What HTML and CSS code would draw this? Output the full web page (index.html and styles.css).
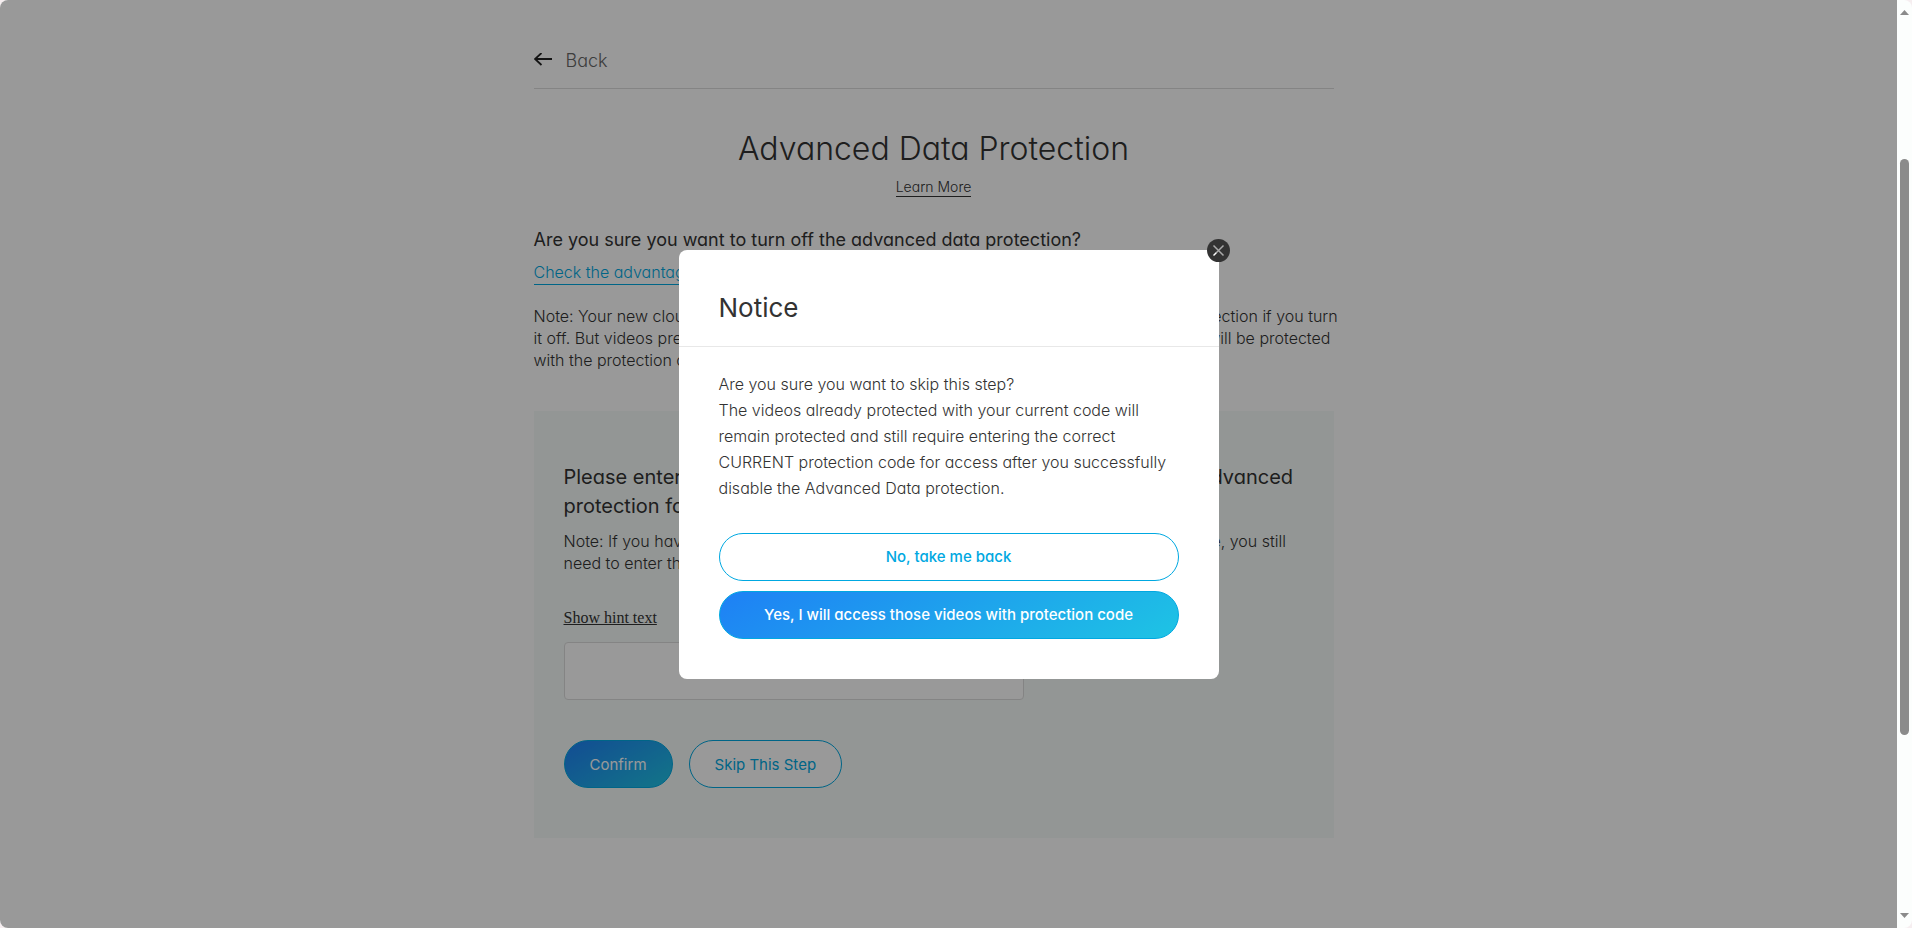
FILE: index.html
```html
<!DOCTYPE html>
<html lang="en">
<head>
<meta charset="utf-8">
<meta name="viewport" content="width=device-width, initial-scale=1">
<title>Advanced Data Protection</title>
<link rel="stylesheet" href="styles.css">
</head>
<body>
<div class="window">
  <div class="viewport">
    <main class="page">
      <a class="back" href="#">
        <svg class="back-icon" width="18" height="14" viewBox="0 0 18 14" fill="none" stroke="currentColor" stroke-width="1.800" aria-hidden="true"><path d="M18 6H1M7.500 0L1 6l6.500 6"/></svg>
        <span>Back</span>
      </a>
      <header class="page-head">
        <h1 class="title">Advanced Data Protection</h1>
        <a class="learn-more" href="#">Learn More</a>
      </header>
      <h2 class="question">Are you sure you want to turn off the advanced data protection?</h2>
      <a class="advantages" href="#">Check the advantages of protection</a>
      <p class="note intro-note">Note: Your new cloud storage videos will no longer be covered by your advanced data protection if you turn<br>it off. But videos previously recorded in cloud during your advanced data protection mode will be protected<br>with the protection code.</p>
      <form class="panel">
        <h3 class="panel-title">Please enter your existing data protection codes to switch off your advanced<br>protection for your videos</h3>
        <p class="note">Note: If you have videos protected with any earlier protection codes in your cloud space, you still<br>need to enter those codes.</p>
        <a class="hint" href="#">Show hint text</a>
        <input class="code" type="password" aria-label="Protection code">
        <div class="actions">
          <button class="btn btn-primary" type="button">Confirm</button>
          <button class="btn" type="button">Skip This Step</button>
        </div>
      </form>
    </main>
    <div class="overlay">
      <section class="dialog" role="dialog" aria-modal="true" aria-labelledby="dialog-title">
        <button class="close" type="button" aria-label="Close">
          <svg width="23" height="23" viewBox="0 0 23 23" fill="none" aria-hidden="true"><circle cx="11.500" cy="11.500" r="11.500" fill="#333"/><path d="M6.500 6.500l10 10M16.500 6.500L9.500 13.500" stroke="#aaa" stroke-width="1.500"/><path d="M9.500 13.500l-3 3" stroke="#fff" stroke-width="1.500"/></svg>
        </button>
        <h2 class="dialog-title" id="dialog-title">Notice</h2>
        <div class="dialog-body">
          <p class="dialog-text">Are you sure you want to skip this step?<br>The videos already protected with your current code will remain protected and still require entering the correct CURRENT protection code for access after you successfully disable the Advanced Data protection.</p>
          <div class="dialog-actions">
            <button class="btn strong" type="button">No, take me back</button>
            <button class="btn btn-primary strong" type="button">Yes, I will access those videos with protection code</button>
          </div>
        </div>
      </section>
    </div>
  </div>
  <div class="scrollbar" aria-hidden="true">
    <svg class="scroll-arrow" width="9" height="5" viewBox="0 0 9 5"><path d="M4.500 0L9 5H0z" fill="#8b8b8b"/></svg>
    <div class="track"><div class="thumb"></div></div>
    <svg class="scroll-arrow" width="9" height="5" viewBox="0 0 9 5"><path d="M0 0h9L4.500 5z" fill="#8b8b8b"/></svg>
  </div>
</div>
</body>
</html>
```
FILE: styles.css
```css
* { box-sizing: border-box; }

body {
  margin: 0;
  background: #f6eef0;
  color: #333;
  font-family: Inter, "Open Sans", sans-serif;
  font-feature-settings: "cv11";
  font-size: 16px;
  font-weight: 300;
}

h1, h2, h3, p { margin: 0; font-weight: 400; }
a { color: inherit; text-decoration: none; }

.window {
  display: flex;
  height: 100vh;
  border-radius: 8px;
  overflow: hidden;
  background: #fcfefd;
}

.viewport {
  position: relative;
  flex: 1;
  overflow: hidden;
  background: #fff;
}

.page {
  display: flex;
  flex-direction: column;
  align-items: flex-start;
  max-width: 830px;
  margin: 0 auto;
  padding: 32px 30px 0 0;
}

.back {
  display: flex;
  align-items: center;
  gap: 14px;
  width: 100%;
  height: 57px;
  border-bottom: 1px solid #ddd;
  font-size: 18px;
  color: #666;
}
.back-icon { color: #222; }

.page-head {
  display: flex;
  flex-direction: column;
  align-items: center;
  width: 100%;
  padding-top: 40px;
}
.title { font-size: 32px; line-height: 40px; font-weight: 300; }
.learn-more {
  margin-top: 8px;
  border-bottom: 1px solid #333;
  font-size: 14px;
  line-height: 19px;
}

.question { margin-top: 30px; font-size: 18px; line-height: 26px; }
.advantages {
  margin-top: 8px;
  border-bottom: 1px solid #00a8e1;
  line-height: 23px;
  color: #00a8e1;
}
.note { line-height: 22px; font-weight: 300; white-space: nowrap; }
.intro-note { margin-top: 20px; }

.panel {
  display: flex;
  flex-direction: column;
  align-items: flex-start;
  width: 100%;
  margin-top: 40px;
  padding: 52px 30px 50px;
  background: #f5faf8;
}
.panel-title { font-size: 20px; line-height: 29px; white-space: nowrap; }
.panel .note { margin-top: 9px; }
.hint {
  margin-top: 34px;
  font-family: "Liberation Serif", serif;
  font-size: 16px;
  font-weight: 400;
  line-height: 20px;
  text-decoration: underline;
}
.code {
  width: 100%;
  max-width: 460px;
  height: 58px;
  margin-top: 14px;
  padding: 0 16px;
  border: 1px solid #ddd;
  border-radius: 4px;
  background: #fff;
  font: inherit;
}
.actions { display: flex; gap: 16px; margin-top: 40px; }

.btn {
  height: 48px;
  padding: 0 25px;
  border: 1px solid #00a8e1;
  border-radius: 24px;
  background: #fff;
  color: #00a8e1;
  font: inherit;
  font-size: 15px;
  font-weight: 400;
  font-feature-settings: inherit;
}
.btn-primary {
  background: linear-gradient(150deg, #1e80f5, #1ec4e4);
  color: #fff;
}
.strong { font-weight: 500; }

.overlay {
  position: absolute;
  inset: 0;
  display: flex;
  align-items: center;
  justify-content: center;
  background: rgba(0, 0, 0, 0.4);
}
.dialog {
  position: relative;
  width: 540px;
  border-radius: 8px;
  background: #fff;
}
.dialog-title {
  padding: 38px 40px 18px;
  border-bottom: 1px solid #e8e8e8;
  font-size: 26px;
  line-height: 40px;
}
.dialog-body { padding: 24px 40px 40px; }
.dialog-text { line-height: 26px; font-weight: 300; }
.dialog-actions {
  display: flex;
  flex-direction: column;
  gap: 10px;
  margin-top: 32px;
}
.close {
  position: absolute;
  top: -11px;
  right: -11px;
  padding: 0;
  border: 0;
  background: none;
}
.close svg { display: block; }

.scrollbar {
  display: flex;
  flex-direction: column;
  align-items: center;
  width: 15px;
  padding: 10px 0;
}
.scroll-arrow { flex: none; }
.track {
  display: grid;
  flex: 1;
  grid-template-rows: 144fr 576fr 178fr;
}
.thumb {
  grid-row: 2;
  width: 9px;
  border-radius: 5px;
  background: #8b8b8b;
}
```
